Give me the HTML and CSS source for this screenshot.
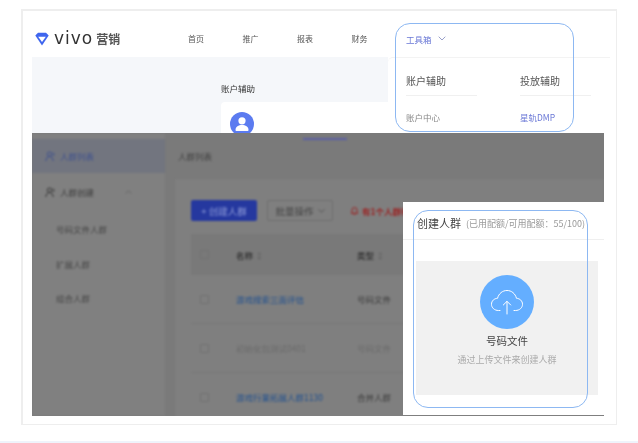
FILE: index.html
```html
<!DOCTYPE html>
<html lang="zh">
<head>
<meta charset="utf-8">
<title>vivo 营销</title>
<link rel="stylesheet" href="styles.css">
</head>
<body>
<main class="frame">
  <div class="shot">
    <header class="topbar soft">
      <div class="logo">
        <svg class="logo-mark" width="14" height="14" viewBox="0 0 14 14"><path d="M3 .8h8L13.700 3.500 7 13.400 .3 3.500z" fill="#3f66ee"/><path d="M3.200 4.800h7.600L7 10z" fill="#fff"/></svg>
        <span class="logo-word">vivo</span><span class="logo-cn">营销</span>
      </div>
      <nav class="nav">
        <span class="nav-item">首页</span>
        <span class="nav-item">推广</span>
        <span class="nav-item">报表</span>
        <span class="nav-item">财务</span>
        <span class="nav-item nav-active">工具箱
          <svg class="chev" width="8" height="5" viewBox="0 0 8 5"><path d="M.7.7 4 4 7.3.7" fill="none" stroke="#8d95c4" stroke-width=".9"/></svg>
        </span>
      </nav>
    </header>
    <section class="below soft">
      <div class="light-panel">
        <h2 class="panel-title">账户辅助</h2>
        <div class="account-card">
          <svg class="avatar" width="24" height="24" viewBox="0 0 24 24"><circle cx="12" cy="12" r="12" fill="#5b7bf0"/><circle cx="12" cy="8.8" r="3.6" fill="#fff"/><path d="M5.5 18c0-3.4 3-5 6.5-5s6.500 1.600 6.500 5c0 .6-.5 1-1 1H6.500c-.5 0-1-.4-1-1z" fill="#fff"/></svg>
        </div>
      </div>
      <div class="dropdown">
        <div class="drop-col">
          <h3 class="drop-head">账户辅助</h3>
          <a class="drop-link">账户中心</a>
        </div>
        <div class="drop-col">
          <h3 class="drop-head">投放辅助</h3>
          <a class="drop-link drop-blue">星轨DMP</a>
        </div>
      </div>
    </section>
    <section class="overlay">
      <aside class="sidebar">
        <div class="side-row side-active">
          <svg width="11" height="11" viewBox="0 0 11 11" fill="none" stroke="#3c4f8e" stroke-width="1"><circle cx="4.500" cy="3.200" r="2.200"/><path d="M.8 10c.3-3 1.800-4.500 3.700-4.500S7.900 7 8.200 10M8 1.500c1 .5 1.400 2.500.2 3.500"/></svg>
          <span>人群列表</span>
        </div>
        <div class="side-row">
          <svg width="11" height="11" viewBox="0 0 11 11" fill="none" stroke="#333" stroke-width="1"><circle cx="4.500" cy="3.200" r="2.200"/><path d="M.8 10c.3-3 1.800-4.500 3.700-4.500S7.900 7 8.200 10M8 1.500c1 .5 1.400 2.500.2 3.500"/></svg>
          <span>人群创建</span>
          <svg class="side-chev" width="7" height="4" viewBox="0 0 7 4"><path d="M.5 3.500 3.500.8l3 2.700" fill="none" stroke="#686868"/></svg>
        </div>
        <div class="side-sub">号码文件人群</div>
        <div class="side-sub">扩展人群</div>
        <div class="side-sub">组合人群</div>
      </aside>
      <div class="content">
        <div class="tab-line"></div>
        <div class="crumb">人群列表</div>
        <div class="card">
          <div class="toolbar">
            <button class="btn-primary">+ 创建人群</button>
            <button class="btn-ghost">批量操作
              <svg width="7" height="4" viewBox="0 0 7 4"><path d="M.5.5l3 2.700 3-2.700" fill="none" stroke="#555"/></svg>
            </button>
            <span class="warn">
              <svg width="9" height="9" viewBox="0 0 9 9"><path d="M2 6.500V4a2.500 2.500 0 0 1 5 0v2.500l1 .8H1zM3.800 8.500h1.400" fill="none" stroke="#9b2222"/></svg>
              有1个人群待处理
            </span>
          </div>
          <div class="row row-head">
            <span class="check"></span><span class="name">名称 <i class="sort">↕</i></span><span>类型 <i class="sort">↕</i></span>
          </div>
          <div class="row">
            <span class="check"></span><span class="name link">游戏搜索三面评估</span><span>号码文件</span>
          </div>
          <div class="row row-dim">
            <span class="check"></span><span class="name">初始化包测试0401</span><span>号码文件</span>
          </div>
          <div class="row">
            <span class="check"></span><span class="name link">游戏行業拓展人群1130</span><span>合并人群</span>
          </div>
        </div>
      </div>
    </section>
    <section class="popup">
      <div class="popup-head soft">
        <span class="popup-title">创建人群</span>
        <span class="popup-note">(已用配额/可用配额：55/100)</span>
      </div>
      <div class="upload-box soft">
        <div class="upload-icon">
          <svg width="34" height="26" viewBox="0 0 34 26" fill="none" stroke="#fff" stroke-width="1" stroke-linecap="round" stroke-linejoin="round"><path d="M10 21.500H8.500C4.500 21.500 1.500 18.800 1.500 15.300S4.200 9.500 7.500 9.300C8.800 4.500 12.500 1.500 17 1.500s8.200 3 9.500 7.800c3.300.2 6 2.600 6 6s-3 6.200-7 6.200H24"/><path d="M17 25V12.500M13.300 16 17 12.300 20.700 16"/></svg>
        </div>
        <div class="upload-name">号码文件</div>
        <div class="upload-desc">通过上传文件来创建人群</div>
      </div>
    </section>
    <div class="ring ring-nav"></div>
    <div class="ring ring-popup"></div>
  </div>
</main>
<div class="page-strip"></div>
</body>
</html>
```

FILE: styles.css
```css
* { box-sizing: border-box; }
html, body { margin: 0; padding: 0; background: #fff; }
body {
  width: 638px;
  height: 443px;
  overflow: hidden;
  font-family: "Noto Sans CJK SC", "Noto Sans", sans-serif;
  color: #444;
}
h2, h3 { margin: 0; font-weight: 400; }

.frame {
  width: 596px;
  height: 416px;
  margin: 9px 0 0 21px;
  padding: 14px 0 0 9px;
  border: 2px solid #eeeeee;
  border-right-width: 1px;
  border-bottom-width: 1px;
}
.shot { position: relative; width: 578px; height: 391px; }
.soft { filter: blur(.5px); }

.topbar { display: flex; align-items: center; height: 32px; padding-bottom: 5px; }
.logo { display: flex; align-items: center; width: 156px; padding-left: 3px; }
.logo-mark { margin-right: 5px; }
.logo-word { font: 400 17px/1 "DejaVu Sans", sans-serif; letter-spacing: 1px; color: #333; margin-right: 3px; }
.logo-cn { font-size: 12px; font-weight: 700; line-height: 1; color: #555; }
.nav { display: flex; font-size: 8px; line-height: 14px; color: #555; }
.nav-item { width: 54.500px; white-space: nowrap; }
.nav-active { color: #6a78d6; display: flex; align-items: center; gap: 6px; font-size: 8.500px; }

.below { display: flex; height: 76px; }
.light-panel {
  width: 356px;
  padding: 25px 0 0 189px;
  background: #f5f7fa;
}
.panel-title { font-size: 8.500px; line-height: 12px; color: #333; }
.account-card {
  height: 40px;
  margin-top: 8px;
  padding: 10px 0 0 9px;
  background: #fff;
  border-radius: 4px 0 0 0;
}
.avatar { display: block; }
.dropdown {
  display: flex;
  gap: 43px;
  width: 222px;
  padding: 16px 0 0 18px;
  background: #fff;
  border-top: 1px solid #f3f3f3;
  border-radius: 5px 0 0 0;
}
.drop-col { width: 71px; }
.drop-head {
  height: 22px;
  font-size: 10px;
  line-height: 14px;
  color: #555;
  border-bottom: 1px solid #f0f0f0;
}
.drop-link { display: block; margin-top: 15px; font-size: 8.500px; line-height: 12px; color: #888; }
.drop-blue { color: #6a78d6; }

.overlay {
  position: absolute;
  left: 0;
  top: 108px;
  width: 572px;
  height: 283px;
  display: flex;
  background: #7a7a7a;
  overflow: hidden;
}
.sidebar { width: 133px; padding-top: 6px; background: #808080; font-size: 8.500px; color: #3a3a3a; filter: blur(.9px); }
.side-row { display: flex; align-items: center; gap: 4px; height: 34px; padding-left: 13px; margin-bottom: 3px; }
.side-row svg:first-child { flex: none; }
.side-active { background: #72757f; color: #3c4f8e; margin-bottom: 2px; }
.side-chev { margin-left: 27px; }
.side-sub { height: 34.500px; padding-left: 24px; line-height: 34px; color: #444; }
.content { position: relative; flex: 1; padding: 6px 0 0 10px; filter: blur(.9px); }
.tab-line { position: absolute; left: 138px; top: 5px; width: 44px; height: 2px; background: #5b5fa6; }
.crumb { height: 40px; padding: 10px 0 0 3px; font-size: 8.500px; line-height: 14px; color: #3e3e3e; }
.card { height: 260px; padding: 21px 0 0 16px; background: #7f7f7f; }
.toolbar { display: flex; align-items: center; height: 21px; font-size: 8.500px; }
.btn-primary {
  width: 66px; height: 21px; padding: 0;
  border: 0; border-radius: 2px;
  background: #25389f; color: #8e9bd8;
  font: inherit;
  font-size: 9.500px;
}
.btn-ghost {
  display: flex; align-items: center; justify-content: center; gap: 4px;
  width: 66px; height: 21px; margin-left: 10px; padding: 0;
  border: 1px solid #6e6e6e; border-radius: 2px;
  background: transparent; color: #444;
  font: inherit;
  font-size: 9.500px;
}
.warn { display: flex; align-items: center; gap: 3px; margin-left: 17px; color: #9b2222; font-weight: 700; white-space: nowrap; }
.row {
  display: flex;
  align-items: center;
  height: 49px;
  padding-left: 9px;
  border-bottom: 1px solid #777;
  font-size: 8.500px;
  color: #3a3a3a;
}
.row-head { height: 41px; margin-top: 13px; background: #797979; border: 0; font-weight: 500; color: #2e2e2e; }
.check { width: 9px; height: 9px; border: 1px solid #707070; border-radius: 1px; }
.name { width: 121px; margin-left: 27px; white-space: nowrap; }
.sort { font-style: normal; color: #666; }
.link { color: #20508f; }
.row-dim { color: #6a6a6a; }

.popup { position: absolute; left: 371px; top: 177px; width: 201px; height: 213px; background: #fff; }
.popup-head {
  display: flex;
  align-items: center;
  gap: 5px;
  height: 38px;
  padding: 5px 0 0 14px;
  border-bottom: 1px solid #efefef;
  white-space: nowrap;
}
.popup-title { font-size: 11px; color: #444; }
.popup-note { font-size: 9px; color: #999; }
.upload-box {
  display: flex;
  flex-direction: column;
  align-items: center;
  width: 182px;
  height: 134px;
  margin: 21px 0 0 13px;
  padding-top: 14px;
  background: #f1f1f1;
}
.upload-icon {
  display: flex;
  align-items: center;
  justify-content: center;
  width: 54px;
  height: 54px;
  border-radius: 50%;
  background: #64aeff;
}
.upload-name { margin-top: 4px; font-size: 10.500px; line-height: 16px; color: #444; }
.upload-desc { margin-top: 5px; font-size: 9px; line-height: 12px; color: #aaa; }

.ring { position: absolute; border: 1px solid #8db8f2; border-radius: 15px; pointer-events: none; }
.ring-nav { left: 363px; top: -2px; width: 179px; height: 109px; }
.ring-popup { left: 381px; top: 185px; width: 175px; height: 198px; }

.page-strip { height: 2px; margin-top: 16px; background: #eff3fb; }
```
